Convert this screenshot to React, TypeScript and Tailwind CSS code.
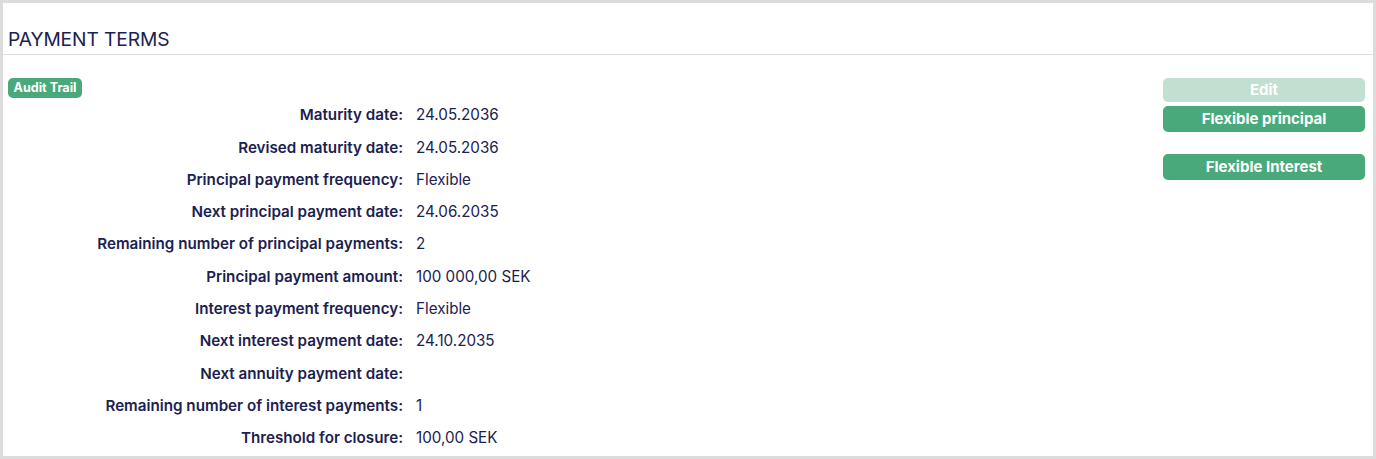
const rows: [string, string][] = [
  ["Maturity date:", "24.05.2036"],
  ["Revised maturity date:", "24.05.2036"],
  ["Principal payment frequency:", "Flexible"],
  ["Next principal payment date:", "24.06.2035"],
  ["Remaining number of principal payments:", "2"],
  ["Principal payment amount:", "100 000,00 SEK"],
  ["Interest payment frequency:", "Flexible"],
  ["Next interest payment date:", "24.10.2035"],
  ["Next annuity payment date:", ""],
  ["Remaining number of interest payments:", "1"],
  ["Threshold for closure:", "100,00 SEK"],
];

export default function App() {
  return (
    <div className="h-[459px] w-[1376px] overflow-hidden border-[3px] border-[#dcdcdc] bg-white font-['Inter',sans-serif] text-[#1b2150]">
      <div className="flex h-[52px] items-end border-b border-[#dcdcdc] px-[5px] pb-[5px]">
        <h2 className="text-[19.2px] leading-none font-normal tracking-[-0.1px]">PAYMENT TERMS</h2>
      </div>
      <div className="flex justify-between pt-[23px] pr-[8px] pl-[5px]">
        <div>
          <div className="flex">
            <span className="flex h-[20px] items-center rounded-[5px] bg-[#4aa97a] px-[5.5px] text-[12.6px] leading-none font-bold text-white">
              Audit Trail
            </span>
          </div>
          <div className="mt-[1.5px]">
            {rows.map(([label, value]) => (
              <div key={label} className="flex h-[32.3px] items-center text-[15.2px]">
                <div className="w-[395px] text-right font-semibold">{label}</div>
                <div className="pl-[13px]">{value}</div>
              </div>
            ))}
          </div>
        </div>
        <div className="flex w-[202px] flex-col">
          <button className="h-[24px] rounded-[5px] bg-[#c2e0d2] text-[15px] font-bold text-white">Edit</button>
          <button className="mt-[4px] h-[26px] rounded-[5px] bg-[#4aa97a] text-[15px] font-bold text-white">
            Flexible principal
          </button>
          <button className="mt-[22px] h-[26px] rounded-[5px] bg-[#4aa97a] text-[15px] font-bold text-white">
            Flexible Interest
          </button>
        </div>
      </div>
    </div>
  );
}
